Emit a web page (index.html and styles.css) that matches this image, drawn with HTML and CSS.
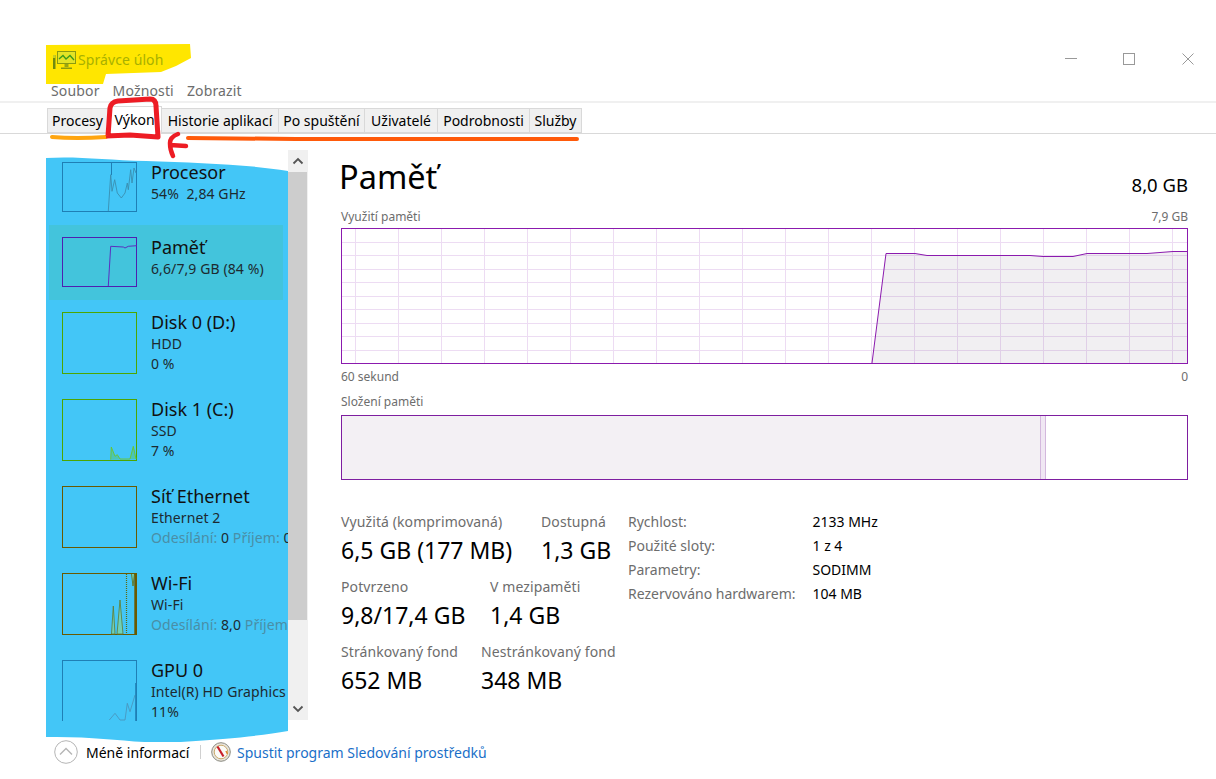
FILE: index.html
```html
<!DOCTYPE html>
<html lang="cs">
<head>
<meta charset="utf-8">
<title>Správce úloh</title>
<link rel="stylesheet" href="styles.css">
</head>
<body>
<div class="window">
  <header class="titlebar">
    <svg class="paint-yellow" width="150" height="42" viewBox="0 0 150 42"><path d="M0 2 L144 1 L145 15 L130 23 L115 29 L60 31 L57 41 L0 41 Z" fill="#ffe600"/></svg>
    <div class="app-title">
      <svg class="app-icon" width="25" height="20" viewBox="0 0 25 20"><path d="M1 5 H3.5 V19 H1 Z" fill="#6f8a10"/><path d="M1 5 H3.5 V8 H1 Z" fill="#c9cf20"/><rect x="5.5" y="1.5" width="18" height="12" fill="#e3e326" stroke="#8b9a10"/><path d="M7 9 L11 5.5 L14 9 L18 5.5 L22 10" fill="none" stroke="#3c9a1a" stroke-width="1.3"/><path d="M12.5 14 H16.5 V17 H12.5 Z" fill="#9aa612"/><path d="M9 17.5 H20 V19 H9 Z" fill="#8b9a10"/></svg>
      <span>Správce úloh</span>
    </div>
    <div class="win-controls">
      <svg width="12" height="12" viewBox="0 0 12 12"><path d="M0 5.5 H12" stroke="#999" stroke-width="1"/></svg>
      <svg width="12" height="12" viewBox="0 0 12 12"><rect x="0.5" y="0.5" width="11" height="11" fill="none" stroke="#999"/></svg>
      <svg width="12" height="12" viewBox="0 0 12 12"><path d="M0.5 0.5 L11.5 11.5 M11.5 0.5 L0.5 11.5" stroke="#999" stroke-width="1"/></svg>
    </div>
  </header>
  <nav class="menubar"><span>Soubor</span><span>Možnosti</span><span>Zobrazit</span></nav>
  <div class="tabs">
    <span class="tab tab-w61">Procesy</span>
    <span class="tab tab-active">Výkon</span>
    <span class="tab tab-w117">Historie aplikací</span>
    <span class="tab tab-w86">Po spuštění</span>
    <span class="tab tab-w73">Uživatelé</span>
    <span class="tab tab-w92">Podrobnosti</span>
    <span class="tab tab-w52">Služby</span>
  </div>
  <div class="content">
    <aside class="sidebar">
      <svg class="paint-blue" width="242" height="586" viewBox="0 0 242 586"><path d="M0 2 C30 0 60 4 100 5 C150 7 200 8 242 15 L242 575 C215 580 180 583 120 587 C80 586 50 580 0 581 Z" fill="#43c6f7"/></svg>
      <div class="device-list">
        <div class="device">
          <svg class="thumb thumb-s" viewBox="0 0 75 50"><rect x=".5" y=".5" width="74" height="49" fill="none" stroke="#1f7fb5"/><path d="M49.5 0 V13" stroke="#1f7fb5"/><path d="M46.3 49 L48.7 12.7 L50 29.3 L52.7 17.7 L55.3 31 L59.3 36 L63 31 L65.3 21 L66.3 27.7 L68.7 7.7 L70 21 L72 6 L74 11" fill="none" stroke="#3a8fb0" stroke-width=".9"/></svg>
          <div class="device-text"><div class="dname">Procesor</div><div class="dsub">54%&nbsp; 2,84 GHz</div></div>
        </div>
        <div class="device device-active">
          <svg class="thumb thumb-s" viewBox="0 0 75 50"><rect x=".5" y=".5" width="74" height="49" fill="none" stroke="#4f1fb0"/><path d="M46.3 49 L48.7 9.3 L61.3 10 L63 11 L66.3 9.3 L74.7 8.7" fill="none" stroke="#5a2fc0"/></svg>
          <div class="device-text"><div class="dname">Paměť</div><div class="dsub">6,6/7,9 GB (84 %)</div></div>
        </div>
        <div class="device">
          <svg class="thumb thumb-l" viewBox="0 0 75 62"><rect x=".5" y=".5" width="74" height="61" fill="none" stroke="#4ea600"/></svg>
          <div class="device-text"><div class="dname">Disk 0 (D:)</div><div class="dsub">HDD</div><div class="dsub">0 %</div></div>
        </div>
        <div class="device">
          <svg class="thumb thumb-l" viewBox="0 0 75 62"><rect x=".5" y=".5" width="74" height="61" fill="none" stroke="#4ea600"/><path d="M48.7 60.7 L49.3 48 L53 57.3 L55.3 55.7 L58 60 L68 60 L71.3 47.3 L74 60" fill="#5dc41f" fill-opacity=".3" stroke="#6cc52a" stroke-width=".9"/></svg>
          <div class="device-text"><div class="dname">Disk 1 (C:)</div><div class="dsub">SSD</div><div class="dsub">7 %</div></div>
        </div>
        <div class="device">
          <svg class="thumb thumb-l" viewBox="0 0 75 62"><rect x=".5" y=".5" width="74" height="61" fill="none" stroke="#6a5a00"/></svg>
          <div class="device-text"><div class="dname">Síť Ethernet</div><div class="dsub">Ethernet 2</div><div class="dsub"><span class="muted">Odesílání:</span> 0 <span class="muted">Příjem:</span> 0 kb/s</div></div>
        </div>
        <div class="device">
          <svg class="thumb thumb-l" viewBox="0 0 75 62"><rect x=".5" y=".5" width="74" height="61" fill="none" stroke="#6a5a00"/><path d="M49.5 61 L51.3 33 L53 61 Z M55 61 L58 27 L61 61 Z" fill="#6fd0b8" stroke="#5f7a30" stroke-width=".8"/><path d="M64.5 1 V61" stroke="#5f6a10" stroke-dasharray="1 1" stroke-width="1.2"/><path d="M69.5 1 L71 13 L72.5 1" fill="#6fd0b8" stroke="#5f6a10" stroke-width=".8"/><path d="M73.5 1 V61" stroke="#6a5a00" stroke-width="2.4"/></svg>
          <div class="device-text"><div class="dname">Wi-Fi</div><div class="dsub">Wi-Fi</div><div class="dsub"><span class="muted">Odesílání:</span> 8,0 <span class="muted">Příjem:</span> 0 kb/s</div></div>
        </div>
        <div class="device">
          <svg class="thumb thumb-l" viewBox="0 0 75 62"><rect x=".5" y=".5" width="74" height="61" fill="none" stroke="#1f7fb5"/><path d="M47.3 60 L53 53.3 L58 60 L63 60 L65.3 43.3 L68 51.7 L73 35" fill="none" stroke="#4a90b8" stroke-width=".8"/><path d="M73.7 23 V61" stroke="#1f7fb5"/></svg>
          <div class="device-text"><div class="dname">GPU 0</div><div class="dsub">Intel(R) HD Graphics 530</div><div class="dsub">11%</div></div>
        </div>
      </div>
    </aside>
    <div class="scrollbar">
      <div class="sb-btn"><svg width="12" height="8" viewBox="0 0 12 8"><path d="M1.5 6.5 L6 2 L10.5 6.5" fill="none" stroke="#555" stroke-width="1.8"/></svg></div>
      <div class="sb-track"><div class="sb-thumb"></div></div>
      <div class="sb-btn"><svg width="12" height="8" viewBox="0 0 12 8"><path d="M1.5 1.5 L6 6 L10.5 1.5" fill="none" stroke="#555" stroke-width="1.8"/></svg></div>
    </div>
    <main class="main">
      <div class="head-row"><h1 class="title">Paměť</h1><span class="capacity">8,0 GB</span></div>
      <div class="cap-row"><span>Využití paměti</span><span>7,9 GB</span></div>
      <svg class="graph" width="847" height="136" viewBox="0 0 847 136">
        <g stroke="#eddcf3" stroke-width="1" shape-rendering="crispEdges">
          <path d="M14.5 0V136M57.5 0V136M100.5 0V136M143.5 0V136M186.5 0V136M229.5 0V136M272.5 0V136M315.5 0V136M358.5 0V136M401.5 0V136M444.5 0V136M487.5 0V136M530.5 0V136M573.5 0V136M616.5 0V136M659.5 0V136M702.5 0V136M745.5 0V136M788.5 0V136M831.5 0V136"/>
          <path d="M0 14.5H847M0 27.5H847M0 41.5H847M0 54.5H847M0 68.5H847M0 81.5H847M0 95.5H847M0 108.5H847M0 122.5H847"/>
        </g>
        <path d="M531 135 L545 25.5 H574 L586 27.5 H689 L702 28.5 H732 L746 25.5 H806 L832 23.5 H847 V135 Z" fill="#76607f" fill-opacity=".1"/>
        <path d="M531 135 L545 25.5 H574 L586 27.5 H689 L702 28.5 H732 L746 25.5 H806 L832 23.5 H847" fill="none" stroke="#8b1aae" stroke-width="1"/>
        <rect x=".5" y=".5" width="846" height="135" fill="none" stroke="#8b1aae" stroke-width="1"/>
      </svg>
      <div class="cap-row cap-below"><span>60 sekund</span><span>0</span></div>
      <div class="cap-row cap-comp"><span>Složení paměti</span></div>
      <div class="comp">
        <div class="comp-used"></div>
        <div class="comp-mod"></div>
      </div>
      <div class="stats">
        <div class="stats-left">
          <div class="stat-row">
            <div class="stat stat-a"><div class="slabel">Využitá (komprimovaná)</div><div class="svalue">6,5 GB (177 MB)</div></div>
            <div class="stat"><div class="slabel">Dostupná</div><div class="svalue">1,3 GB</div></div>
          </div>
          <div class="stat-row">
            <div class="stat stat-b"><div class="slabel">Potvrzeno</div><div class="svalue">9,8/17,4 GB</div></div>
            <div class="stat"><div class="slabel">V mezipaměti</div><div class="svalue">1,4 GB</div></div>
          </div>
          <div class="stat-row">
            <div class="stat stat-c"><div class="slabel">Stránkovaný fond</div><div class="svalue">652 MB</div></div>
            <div class="stat"><div class="slabel">Nestránkovaný fond</div><div class="svalue">348 MB</div></div>
          </div>
        </div>
        <dl class="props">
          <dt>Rychlost:</dt><dd>2133 MHz</dd>
          <dt>Použité sloty:</dt><dd>1 z 4</dd>
          <dt>Parametry:</dt><dd>SODIMM</dd>
          <dt>Rezervováno hardwarem:</dt><dd>104 MB</dd>
        </dl>
      </div>
    </main>
  </div>
  <footer class="footer">
    <svg class="less-icon" width="24" height="24" viewBox="0 0 24 24"><circle cx="12" cy="12" r="11.3" fill="#fff" stroke="#b5b5b5"/><path d="M6 14.5 L12 8.5 L18 14.5" fill="none" stroke="#b5b5b5" stroke-width="1.4"/></svg>
    <span class="less">Méně informací</span>
    <span class="divider"></span>
    <svg class="gauge" width="20" height="20" viewBox="0 0 20 20"><circle cx="10" cy="10" r="9.3" fill="#e8e4dc" stroke="#8a8a80"/><circle cx="10" cy="10" r="6.8" fill="#fbfaf6" stroke="#c9a96a"/><path d="M6.5 4.5 L12.5 14.5" stroke="#c8202a" stroke-width="2.2"/><path d="M15 9 L16.5 12" stroke="#e08a30" stroke-width="1.5"/></svg>
    <a class="link">Spustit program Sledování prostředků</a>
  </footer>
  <svg class="paint-marks" width="600" height="70" viewBox="0 0 600 70">
    <path d="M6 41 Q30 43 60 41" fill="none" stroke="#ffa50f" stroke-width="4" stroke-linecap="round"/>
    <path d="M142 42 L250 43 L400 43 L531 43" fill="none" stroke="#ff5a0a" stroke-width="4" stroke-linecap="round"/>
    <path d="M62 40 L64 12 Q65 6 72 5 L104 3 Q110 3 110 10 L112 41 L84 39 L60 40" fill="none" stroke="#ed1c24" stroke-width="5" stroke-linejoin="round"/>
    <path d="M132 38 Q124 41 124 47 Q124 54 127 60 M124 49 L140 50" fill="none" stroke="#ed1c24" stroke-width="4.5" stroke-linecap="round"/>
  </svg>
</div>
</body>
</html>
```
FILE: styles.css
```css
* { box-sizing: border-box; }
html, body { margin: 0; padding: 0; background: #fff; }
body { font-family: "Noto Sans", "Open Sans", sans-serif; color: #000; overflow: hidden; }
.window { position: relative; width: 1216px; height: 779px; padding-top: 44px; overflow: hidden; }

.titlebar { position: relative; height: 36px; display: flex; justify-content: space-between; align-items: flex-start; }
.paint-yellow { position: absolute; left: 46px; top: -1px; }
.app-title { position: relative; display: flex; align-items: center; gap: 1px; margin: 6px 0 0 52px; font-size: 14px; letter-spacing: .08px; line-height: 20px; color: #a8b000; }
.app-icon { display: block; }
.win-controls { display: flex; gap: 46px; margin: 9px 22px 0 0; }
.win-controls svg { display: block; }
.win-controls svg:last-child { margin-left: 1px; }

.menubar { height: 23px; display: flex; gap: 13px; padding: 1px 0 0 51px; font-size: 14px; letter-spacing: .15px; line-height: 20px; color: #6d6d6d; border-bottom: 2px solid #f0f0f0; }

.tabs { height: 31px; padding: 5px 0 0 47px; display: flex; border-bottom: 1px solid #d9d9d9; }
.tab { height: 25px; background: #f0f0f0; border: 1px solid #d9d9d9; border-left-width: 0; font-size: 14px; line-height: 24px; text-align: center; white-space: nowrap; }
.tab:first-child { border-left-width: 1px; }
.tab-w61 { width: 61px; }
.tab-w117 { width: 117px; }
.tab-w86 { width: 86px; }
.tab-w73 { width: 73px; }
.tab-w92 { width: 92px; }
.tab-w52 { width: 52px; }
.tab-active { width: 54px; background: #fff; height: 28px; margin-top: -2px; line-height: 26px; border-bottom: 0; }

.content { height: 570px; margin-top: 16px; display: flex; align-items: flex-start; }
.sidebar { position: relative; width: 242px; margin-left: 46px; height: 571px; }
.paint-blue { position: absolute; left: 0; top: 6px; display: block; }
.device-list { position: relative; height: 571px; overflow: hidden; }
.device { display: flex; gap: 14px; padding: 12px 0 13px 13px; margin-left: 3px; width: 234px; }
.device-active { background: #43c4dc; }
.thumb { flex: none; display: block; width: 75px; }
.thumb-s { height: 50px; }
.thumb-l { height: 62px; }
.device-text { white-space: nowrap; }
.dname { font-size: 18px; line-height: 20px; color: #111; }
.dsub { font-size: 14px; letter-spacing: .1px; line-height: 20px; margin-top: 2px; color: #1d2a30; }
.dsub + .dsub { margin-top: 0; }
.muted { color: #4a8ea6; }

.scrollbar { width: 20px; height: 570px; background: #f0f0f0; display: flex; flex-direction: column; }
.sb-btn { height: 22px; display: flex; align-items: center; justify-content: center; flex: none; }
.sb-btn svg { display: block; }
.sb-track { flex: 1; }
.sb-thumb { height: 448px; width: 19px; background: #cdcdcd; }

.main { width: 847px; margin-left: 33px; }
.head-row { display: flex; justify-content: space-between; align-items: flex-start; height: 50px; }
.title { margin: 4px 0 0 -2px; font-size: 32.5px; font-weight: 400; line-height: 46px; }
.capacity { font-size: 18.5px; line-height: 24px; margin-top: 23px; }
.cap-row { display: flex; justify-content: space-between; font-size: 12px; line-height: 16px; color: #6d6d6d; height: 16px; margin-top: 9px; margin-bottom: 3px; }
.graph { display: block; }
.cap-below { margin-top: 5px; margin-bottom: 0; }
.cap-comp { margin-top: 9px; margin-bottom: 5px; }
.comp { height: 65px; display: flex; border: 1px solid #7e1ea0; }
.comp-used { width: 698px; background: #f3f0f4; }
.comp-mod { width: 6px; background: #f0e7f3; border-left: 1px solid #d3b8dd; border-right: 1px solid #d3b8dd; }

.stats { display: flex; margin-top: 33px; }
.stats-left { width: 287px; }
.stat-row { display: flex; height: 65px; white-space: nowrap; }
.stat-a { width: 200px; }
.stat-b { width: 149px; }
.stat-c { width: 140px; }
.slabel { font-size: 14px; letter-spacing: .1px; line-height: 18px; color: #6d6d6d; }
.svalue { font-size: 23px; line-height: 34px; margin-top: 2px; }
.props { margin: 0; display: grid; grid-template-columns: 184.5px auto; grid-auto-rows: 24px; font-size: 14px; line-height: 18px; }
.props dt { color: #6d6d6d; }
.props dd { margin: 0; }

.footer { display: flex; align-items: center; height: 24px; margin-top: 20px; padding-left: 54px; font-size: 14px; position: relative; }
.less-icon { display: block; }
.less { margin-left: 8px; width: 104px; white-space: nowrap; }
.divider { width: 1px; height: 14px; background: #d0d0d0; margin-left: 10px; }
.gauge { display: block; margin-left: 10px; }
.link { margin-left: 6px; color: #1a6fc8; white-space: nowrap; }

.paint-marks { position: absolute; left: 46px; top: 96px; display: block; pointer-events: none; }
```
